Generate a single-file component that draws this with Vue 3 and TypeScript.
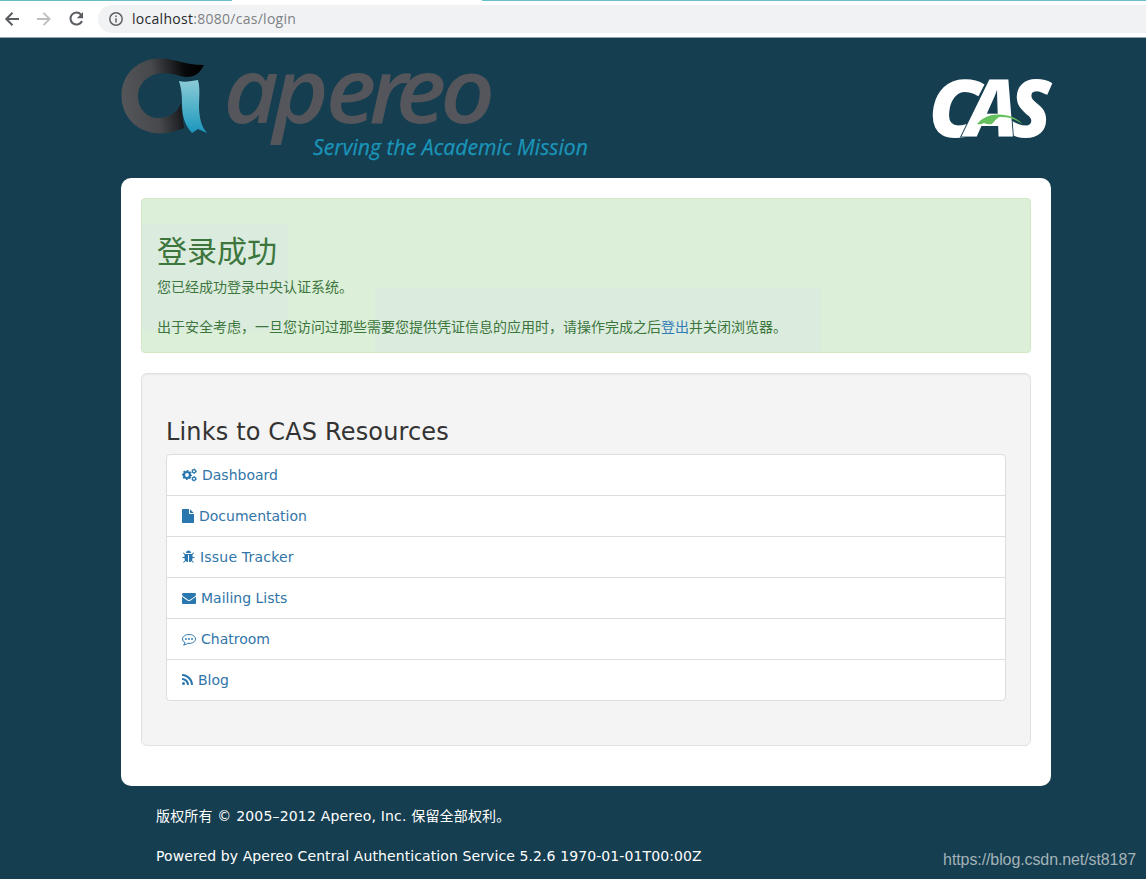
<script setup lang="ts">
interface ResourceLink {
  label: string
  icon: 'cogs' | 'file' | 'bug' | 'mail' | 'chat' | 'rss'
  viewBox: string
  width: number
}

const links: ResourceLink[] = [
  { label: 'Dashboard', icon: 'cogs', viewBox: '0 0 15 14', width: 15 },
  { label: 'Documentation', icon: 'file', viewBox: '128 0 1536 1792', width: 12 },
  { label: 'Issue Tracker', icon: 'bug', viewBox: '64 0 1664 1792', width: 13 },
  { label: 'Mailing Lists', icon: 'mail', viewBox: '0 0 1792 1792', width: 14 },
  { label: 'Chatroom', icon: 'chat', viewBox: '0 0 14 14', width: 14 },
  { label: 'Blog', icon: 'rss', viewBox: '192 0 1408 1792', width: 11 },
]

const paths: Record<string, string> = {
  file: 'M1152 512v-472q22 14 36 28l408 408q14 14 28 36h-472zm-128 32q0 40 28 68t68 28h544v1056q0 40-28 68t-68 28h-1344q-40 0-68-28t-28-68v-1600q0-40 28-68t68-28h800v544z',
  bug: 'M1696 960q0 26-19 45t-45 19h-224q0 171-67 290l208 209q19 19 19 45t-19 45q-18 19-45 19t-45-19l-198-197q-5 5-15 13t-42 28.5-65 36.5-82 29-97 13v-896h-128v896q-51 0-101.5-13.5t-87-33-66-39-43.5-32.5l-15-14-183 207q-20 21-48 21-24 0-43-16-19-18-20.5-44.5t15.5-46.5l202-227q-58-114-58-274h-224q-26 0-45-19t-19-45 19-45 45-19h224v-294l-173-173q-19-19-19-45t19-45 45-19 45 19l173 173h844l173-173q19-19 45-19t45 19 19 45-19 45l-173 173v294h224q26 0 45 19t19 45zm-480-576h-640q0-133 93.5-226.5t226.5-93.5 226.5 93.5 93.5 226.5z',
  mail: 'M1792 710v794q0 66-47 113t-113 47h-1472q-66 0-113-47t-47-113v-794q44 49 101 87 362 246 497 345 57 42 92.5 65.5t94.5 48 110 24.5h2q51 0 110-24.5t94.5-48 92.5-65.5q170-123 498-345 57-39 100-87zm0-294q0 79-49 151t-122 123q-376 261-468 325-10 7-42.5 31t-54 38.5-52 32.5-57.5 27-50 9h-2q-23 0-50-9t-57.5-27-52-32.5-54-38.5-42.5-31q-91-64-262-182.5t-205-142.5q-62-42-117-115.5t-55-136.5q0-78 41.5-130t118.5-52h1472q65 0 112.5 47t47.5 113z',
  rss: 'M576 1344q0 80-56 136t-136 56-136-56-56-136 56-136 136-56 136 56 56 136zm512 123q2 28-17 48-18 21-47 21h-135q-25 0-43-16.5t-20-41.5q-22-229-184.5-391.5t-391.5-184.5q-25-2-41.5-20t-16.5-43v-135q0-29 21-47 17-17 43-17h5q160 13 306 80.5t259 181.5q114 113 181.5 259t80.5 306zm512 2q2 27-18 47-18 20-46 20h-143q-26 0-44.5-17.5t-19.5-42.5q-12-215-101-408.5t-231.5-336-336-231.5-408.5-102q-25-1-42.5-19.5t-17.5-43.5v-143q0-28 20-46 18-18 44-18h3q262 13 501.5 120t425.5 294q187 186 294 425.5t120 501.5z',
}
</script>

<template>
  <div class="window">
    <header class="toolbar">
      <svg class="nav" width="88" height="20" viewBox="0 0 88 20" fill="none">
        <path d="M19 10H6.5M12.5 3.8L6.3 10l6.2 6.2" stroke="#5a5d61" stroke-width="2" />
        <path d="M37 10h12.5M43.5 3.8l6.2 6.2-6.2 6.2" stroke="#bcbec0" stroke-width="1.8" />
        <path d="M81 5.6A6 6 0 1 0 82 12" stroke="#5a5d61" stroke-width="2" />
        <path d="M83 3v6.2h-6.2z" fill="#5a5d61" />
      </svg>
      <div class="address">
        <svg width="14" height="14" viewBox="0 0 14 14" fill="none">
          <circle cx="7" cy="7" r="6.2" stroke="#5f6368" stroke-width="1.5" />
          <path d="M7 6.2v4.2M7 3.4v1.5" stroke="#5f6368" stroke-width="1.5" />
        </svg>
        <span class="url"><b>localhost</b>:8080/cas/login</span>
      </div>
    </header>

    <div class="container">
      <div class="brand">
        <svg class="apereo" width="480" height="120" viewBox="115 50 480 120">
          <defs>
            <linearGradient id="ring" x1="121" y1="100" x2="204" y2="88" gradientUnits="userSpaceOnUse">
              <stop offset="0" stop-color="#55565a" />
              <stop offset=".42" stop-color="#46484c" />
              <stop offset=".8" stop-color="#08090b" />
              <stop offset="1" stop-color="#000" />
            </linearGradient>
            <linearGradient id="ribbon" x1="0" y1="80" x2="0" y2="133" gradientUnits="userSpaceOnUse">
              <stop offset="0" stop-color="#8ccbd6" />
              <stop offset=".45" stop-color="#58b5cb" />
              <stop offset="1" stop-color="#1b96bd" />
            </linearGradient>
          </defs>
          <path
            fill="url(#ring)"
            fill-rule="evenodd"
            d="M204 65C200 73 195 77 187 77C180 77 177 74 168 73.500C151 71 138 82 138 96C138 110 148 118 158 118C169 118 178 112 181 103C182 114 183 121 184 128C176 131 168 133.500 160 133.500C138 133.500 121.500 117 121.500 96C121.500 74 138 58.500 160 58.500C174 58.500 185 65 204 65Z"
          />
          <path fill="url(#ribbon)" d="M179 81C185 82.500 192 81 198 80C201 91 198 102 199.500 114C200.500 123 203 128 207 133L198 129L192 133C185 125 182 117 182 103C182 94 181 87 179 81Z" />
          <text class="word" transform="translate(223.500 122.500) scale(1.05 1)" x="0 47 97.500 138.500 164 206.500" y="0" font-size="91">apereo</text>
          <text class="tagline" x="313" y="154.500" font-size="22.500" textLength="275" lengthAdjust="spacingAndGlyphs">Serving the Academic Mission</text>
        </svg>
        <svg class="cas" width="136" height="80" viewBox="920 65 136 80">
          <g class="cas-word" font-size="79">
            <text x="928.500" y="136.500" textLength="53" lengthAdjust="spacingAndGlyphs">C</text>
            <text x="1009.500" y="136.500" textLength="42" lengthAdjust="spacingAndGlyphs">S</text>
            <text x="966" y="136.500" textLength="52" lengthAdjust="spacingAndGlyphs">A</text>
          </g>
          <path fill="#66c05f" d="M977 124Q985 114 999 114.500Q1015 115 1023 124.500Q1012 116 999 117Q996 119 992 124Q988 125 984 123Q981 125 977 124Z" />
        </svg>
      </div>

      <main class="panel">
        <section class="alert">
          <h2>登录成功</h2>
          <p>您已经成功登录中央认证系统。</p>
          <p>出于安全考虑，一旦您访问过那些需要您提供凭证信息的应用时，请操作完成之后<a>登出</a>并关闭浏览器。</p>
        </section>
        <section class="well">
          <h3>Links to CAS Resources</h3>
          <ul>
            <li v-for="link in links" :key="link.label" :class="link.icon">
              <svg :width="link.width" height="14" :viewBox="link.viewBox">
                <g v-if="link.icon === 'cogs'" fill="none" stroke="currentColor">
                  <circle cx="5" cy="7" r="3" stroke-width="2.200" />
                  <circle cx="5" cy="7" r="4.400" stroke-width="1.300" stroke-dasharray="1.728 1.728" stroke-dashoffset=".864" />
                  <circle cx="12" cy="3.200" r="1.600" stroke-width="1.200" />
                  <circle cx="12" cy="3.200" r="2.300" stroke-width=".8" stroke-dasharray="1.200 1.200" />
                  <circle cx="12" cy="10.800" r="1.600" stroke-width="1.200" />
                  <circle cx="12" cy="10.800" r="2.300" stroke-width=".8" stroke-dasharray="1.200 1.200" />
                </g>
                <g v-else-if="link.icon === 'chat'">
                  <path d="M7 2.500C3.500 2.500.5 4.400.5 7c0 1.500 1 2.800 2.500 3.600C2.900 11.600 2.300 12.400 1.600 13c1.800-.2 3-.8 4-1.700.5.100.9.100 1.400.1 3.600 0 6.500-1.900 6.500-4.400S10.600 2.500 7 2.500z" fill="none" stroke="currentColor" />
                  <circle cx="4" cy="7" r=".95" fill="currentColor" />
                  <circle cx="7" cy="7" r=".95" fill="currentColor" />
                  <circle cx="10" cy="7" r=".95" fill="currentColor" />
                </g>
                <path v-else :d="paths[link.icon]" fill="currentColor" />
              </svg>
              <a>{{ link.label }}</a>
            </li>
          </ul>
        </section>
      </main>

      <footer>
        <p>版权所有 © 2005–2012 Apereo, Inc. 保留全部权利。</p>
        <p class="powered">Powered by Apereo Central Authentication Service 5.2.6 1970-01-01T00:00Z</p>
      </footer>
    </div>
    <span class="watermark">https://blog.csdn.net/st8187</span>
  </div>
</template>

<style>
body {
  margin: 0;
  background: #153e50;
}
</style>

<style scoped>
.window {
  position: relative;
  box-sizing: border-box;
  height: 879px;
  overflow: hidden;
  background: #153e50;
  color: #333;
  font: 14px/20px "DejaVu Sans", "Noto Sans CJK SC", sans-serif;
}
.toolbar {
  box-sizing: border-box;
  height: 38px;
  display: flex;
  align-items: center;
  gap: 10px;
  border-bottom: 1px solid #8fa7b0;
  background:
    linear-gradient(#68bfc9, #68bfc9) 0 0 / 232px 1px no-repeat,
    linear-gradient(#68bfc9, #68bfc9) 482px 0 / 664px 1px no-repeat,
    #fff;
}
.nav {
  flex: none;
}
.address {
  flex: 1;
  display: flex;
  align-items: center;
  gap: 9px;
  height: 28px;
  padding-left: 11px;
  margin-top: 1px;
  border-radius: 14px 0 0 14px;
  background: #f1f2f3;
}
.url {
  color: #7d8185;
  font: 14px/20px "Open Sans", sans-serif;
  letter-spacing: 0.28px;
}
.url b {
  color: #27292c;
  font-weight: 400;
}
.container {
  width: 930px;
  margin-left: 121px;
}
.brand {
  display: flex;
  justify-content: space-between;
  height: 140px;
}
.apereo {
  margin: 12px 0 0 -6px;
  overflow: visible;
}
.cas {
  margin: 27px -5px 0 0;
  overflow: visible;
}
.word {
  font-family: "Open Sans", sans-serif;
  font-weight: 650;
  font-style: italic;
  fill: #54565b;
}
.tagline {
  font-family: "Open Sans", sans-serif;
  font-style: italic;
  fill: #1b95b9;
  stroke: #1b95b9;
  stroke-width: 0.25px;
}
.cas-word {
  font-family: "Open Sans", sans-serif;
  font-weight: 800;
  font-style: italic;
  fill: #fff;
}
.cas-word text:last-child {
  stroke: #153e50;
  stroke-width: 2px;
  paint-order: stroke;
}
.panel {
  box-sizing: border-box;
  height: 608px;
  padding: 20px;
  border-radius: 10px;
  background: #fff;
}
.alert {
  box-sizing: border-box;
  height: 155px;
  padding: 32px 15px 0;
  border: 1px solid #d2e8c5;
  border-radius: 4px;
  background:
    linear-gradient(#dbebde, #dbebde) 0 25px / 146px 107px no-repeat,
    linear-gradient(#dbebde, #dbebde) 233px 89px / 446px 64px no-repeat,
    #dcefd8;
  color: #3c763d;
  font-family: "Noto Sans CJK SC", sans-serif;
}
h2 {
  margin: 0 0 9px;
  font-size: 30px;
  font-weight: 400;
  line-height: 36px;
}
.alert p {
  margin: 0 0 20px;
}
a {
  color: #337ab7;
}
.well {
  box-sizing: border-box;
  height: 373px;
  margin-top: 20px;
  padding: 45px 24px 0;
  border: 1px solid #e1e1e1;
  border-radius: 6px;
  background: #f4f4f4;
  box-shadow: inset 0 1px 1px rgba(0, 0, 0, 0.05);
}
h3 {
  margin: 0 0 8px;
  font-size: 24px;
  font-weight: 400;
  line-height: 27px;
  letter-spacing: 0.15px;
}
ul {
  margin: 0;
  padding: 0;
  list-style: none;
  border: 1px solid #ddd;
  border-radius: 4px;
  background: #fff;
}
li {
  display: flex;
  align-items: center;
  gap: 5px;
  height: 40px;
  padding-left: 15px;
  color: #2a76ae;
}
li + li {
  border-top: 1px solid #ddd;
}
li a {
  color: #3175a8;
}
li.bug a {
  letter-spacing: 0.2px;
}
footer {
  padding: 20px 35px 0;
  color: #fff;
}
footer p {
  margin: 0 0 20px;
  letter-spacing: 0.18px;
}
footer .powered {
  letter-spacing: 0.1px;
}
.watermark {
  position: absolute;
  right: 10px;
  bottom: 10px;
  color: #a3b2b9;
  font: 16px/18px "Liberation Sans", sans-serif;
  letter-spacing: -0.1px;
}
</style>
